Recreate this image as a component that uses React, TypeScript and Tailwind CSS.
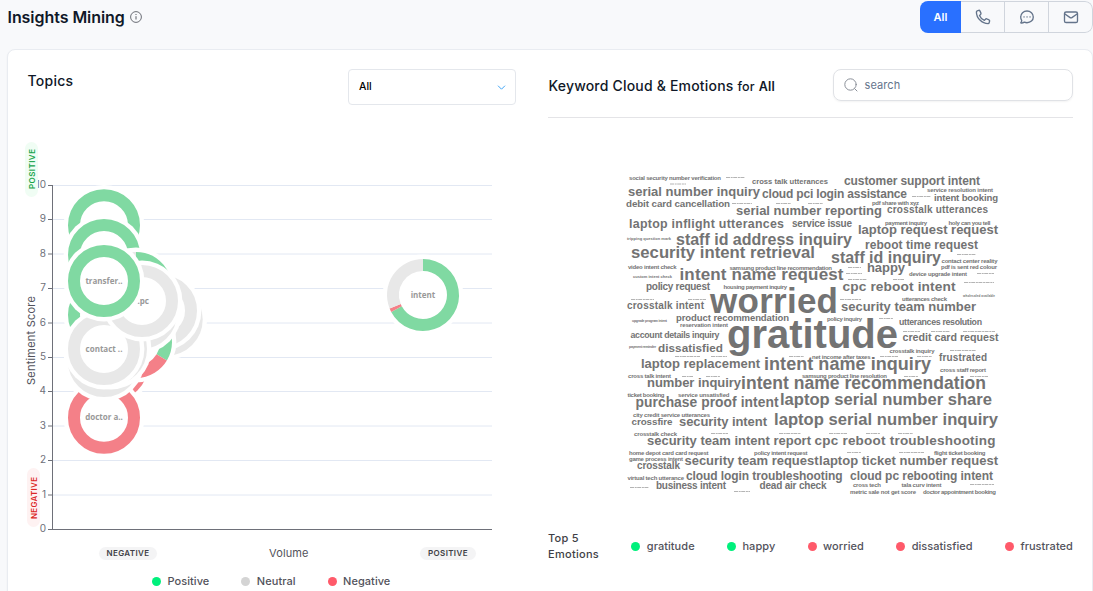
import React from "react";

type Word = [text: string, x: number, y: number, width: number, size: number];

const WORDS: Word[] = [
  ["social security number verification", 629, 180, 92, 6],
  ["cross talk utterances", 752, 184, 76, 7.6],
  ["customer support intent", 844, 185, 136, 12],
  ["serial number inquiry", 628, 196, 132, 13],
  ["cloud pci login assistance", 762, 198, 145, 12],
  ["service resolution intent", 927, 192, 66, 6],
  ["intent booking", 934, 201, 64, 9.6],
  ["debit card cancellation", 626, 207, 104, 9.8],
  ["pdf share with xyz", 872, 205, 47, 6],
  ["serial number reporting", 736, 215, 146, 13],
  ["crosstalk utterances", 887, 213, 101, 10],
  ["laptop inflight utterances", 629, 228, 155, 12.4],
  ["service issue", 792, 226.5, 60, 10],
  ["payment inquiry", 885, 224.5, 42, 6],
  ["holy can you tell", 948.5, 224.5, 42, 6],
  ["laptop request request", 858, 234, 140, 13],
  ["tripping question mark", 627, 239.5, 44, 4],
  ["staff id address inquiry", 676, 244.5, 176, 16],
  ["reboot time request", 865, 249, 113, 12],
  ["security intent retrieval", 631, 258, 184, 16.7],
  ["staff id inquiry", 831, 263, 110, 16],
  ["contact center reality", 941.5, 262.5, 56, 6],
  ["happy", 867, 272, 38, 13],
  ["video intent check", 628, 269, 48.5, 6],
  ["samsung product line recommendation", 729.5, 269.5, 102.5, 6],
  ["pdf is sent red colour", 941, 269, 56, 6],
  ["custom intent check", 633, 278, 39, 4],
  ["intent name request", 679.5, 280, 164, 17],
  ["device upgrade intent", 909, 275.5, 58, 6],
  ["policy request", 646, 290, 64, 10],
  ["housing payment inquiry", 723.5, 288.5, 63.5, 6],
  ["cpc reboot intent", 842.5, 291, 113, 13.7],
  ["wholesaled available", 963, 297, 32, 3],
  ["worried", 710, 313, 128, 35],
  ["utterances check", 902, 301, 45, 6],
  ["crosstalk intent", 627, 309, 77, 10],
  ["security team number", 841, 311, 135, 13],
  ["product recommendation", 676, 321, 113, 9.5],
  ["policy inquiry", 827, 320.5, 35, 6],
  ["utterances resolution", 899, 325, 83, 8.8],
  ["upgrade program intent", 632, 322, 35, 3.5],
  ["reservation intent", 680, 327, 48, 6],
  ["gratitude", 727, 347.5, 171, 40],
  ["account details inquiry", 630.5, 337.5, 89, 8.8],
  ["credit card request", 902.5, 341, 96, 10.7],
  ["payment reminder", 629, 348, 27, 3.5],
  ["dissatisfied", 658, 351.5, 65, 11.7],
  ["crosstalk inquiry", 889.5, 352.5, 45, 6],
  ["net income after taxes", 812, 358.5, 58.5, 6],
  ["frustrated", 939, 360.5, 48, 10],
  ["laptop replacement", 641, 368, 119, 13],
  ["intent name inquiry", 764, 370, 167, 18],
  ["cross staff report", 940, 371.5, 46, 6],
  ["cross talk intent", 628, 378, 43, 6],
  ["samsung product line resolution", 802, 378, 85, 6],
  ["number inquiry", 647, 387, 94, 13],
  ["intent name recommendation", 741, 389, 245, 17.5],
  ["ticket booking", 627.5, 397, 37, 6],
  ["service unsatisfied", 678, 397, 51.5, 6],
  ["purchase proof intent", 635.5, 407, 143, 13.8],
  ["laptop serial number share", 780, 405, 212, 16.6],
  ["city credit service utterances", 633, 416.5, 77, 6],
  ["crossfire", 631.5, 424.5, 41, 9.8],
  ["security intent", 679, 426, 88, 13],
  ["laptop serial number inquiry", 774, 424.5, 224, 16.6],
  ["crosstalk check", 634, 436, 43, 6],
  ["security team intent report", 647, 445, 164, 13],
  ["cpc reboot troubleshooting", 814.5, 445, 181, 13.5],
  ["home depot card card request", 629, 455, 79.5, 6],
  ["policy intent request", 754, 455, 53.5, 6],
  ["flight ticket booking", 934, 455, 51.5, 6],
  ["game process intent", 629, 461, 54, 6],
  ["security team request", 684.5, 464.5, 134, 13],
  ["laptop ticket number request", 819, 464.5, 179, 13],
  ["crosstalk", 637, 469, 43, 10],
  ["virtual tech utterance", 627.5, 480, 56.5, 6],
  ["cloud login troubleshooting", 686, 480, 156.5, 12],
  ["cloud pc rebooting intent", 850, 480, 143, 12],
  ["business intent", 656, 488.5, 70, 10],
  ["dead air check", 759.5, 488.5, 67, 10],
  ["cross tech", 853, 486.5, 28, 6],
  ["tala curv intent", 901.5, 486.5, 40, 6],
  ["metric sale not get score", 850, 493.5, 66, 6],
  ["doctor appointment booking", 923, 493.5, 73, 6],
];

// Keywords too small to read: start, end and height of each.
const SPECKS: [number, number, number][] = [
  [726, 745, 177.5], [670, 686, 184], [732, 752, 203.5], [776, 791, 203.5], [808, 823, 203.5],
  [912, 931, 196.5], [957, 976, 254.5], [846, 862, 273.5], [977, 994, 273.5], [848, 867, 279.5],
  [893, 904, 279.5], [848, 861, 267.5], [964, 994, 282.5], [631, 654, 299.5], [688, 706, 299.5],
  [840, 861, 299.5], [879, 893, 318.5], [903, 920, 331.5], [931, 950, 331.5], [963, 995, 331.5],
  [950, 976, 350.5], [675, 700, 356.5], [711, 727, 356.5], [789, 804, 356.5], [880, 898, 356.5],
  [917, 932, 356.5], [682, 693, 376.5], [706, 720, 376.5], [904, 918, 376.5], [970, 988, 376.5],
  [711, 728, 433.5], [779, 801, 433.5], [829, 847, 433.5], [866, 880, 433.5], [898, 913, 433.5],
  [847, 861, 452.5], [899, 924, 452.5], [630, 649, 487.5], [970, 994, 484.5], [734, 750, 491.5],
];

const GREEN = "#80d9a2";
const RED = "#f48088";
const GREY = "#e8e8e8";

type Slice = [color: string, from: number, to: number];
type Donut = { x: number; y: number; slices: Slice[]; label?: string };

const full = (c: string): Slice[] => [[c, 0, 360]];

const DONUTS: Donut[] = [
  { x: 104, y: 225.3, slices: full(GREEN) },
  { x: 104, y: 255, slices: full(GREEN) },
  { x: 104, y: 315, slices: full(GREEN) },
  { x: 112, y: 365, slices: full(RED) },
  { x: 104, y: 417.7, slices: full(RED), label: "doctor a.." },
  { x: 166.7, y: 319.5, slices: full(GREY) },
  { x: 161, y: 310.7, slices: full(GREY) },
  { x: 136, y: 342, slices: [[GREEN, 0, 121], [RED, 121, 360]] },
  { x: 136, y: 288, slices: [[GREEN, 0, 300], [GREY, 300, 360]] },
  { x: 141, y: 313, slices: full(GREY) },
  { x: 104, y: 361, slices: full(GREY) },
  { x: 111, y: 349, slices: full(GREY) },
  { x: 104, y: 349, slices: full(GREY), label: "contact .." },
  { x: 142, y: 301, slices: full(GREY), label: "..pc" },
  { x: 104, y: 281, slices: full(GREEN), label: "transfer.." },
  { x: 423, y: 295, slices: [[GREEN, 0, 242], [RED, 242, 248], [GREY, 248, 360]], label: "intent" },
];

function arc(cx: number, cy: number, r: number, from: number, to: number) {
  const p = (a: number) => {
    const t = ((a - 90) * Math.PI) / 180;
    return `${cx + r * Math.cos(t)} ${cy + r * Math.sin(t)}`;
  };
  return `M ${p(from)} A ${r} ${r} 0 ${to - from > 180 ? 1 : 0} 1 ${p(to)}`;
}

function DonutMark({ x, y, slices, label }: Donut) {
  return (
    <g>
      <circle cx={x} cy={y} r={40.4} fill="#fff" />
      {slices.map(([color, from, to]) =>
        to - from === 360 ? (
          <circle key={from} cx={x} cy={y} r={30} fill="none" stroke={color} strokeWidth={12} />
        ) : (
          <path key={from} d={arc(x, y, 30, from, to)} fill="none" stroke={color} strokeWidth={12} />
        ),
      )}
      {label && (
        <text x={x} y={y + 2.7} textAnchor="middle" className="fill-[#999] font-['Open_Sans',sans-serif] text-[8px] font-bold">
          {label}
        </text>
      )}
    </g>
  );
}

// Centre line of each grid line, from score 0 to score 10.
const TICK_Y = [529.5, 495, 460.5, 426, 391.5, 357.5, 323, 288.5, 254, 219.5, 185.5];

function TopicsChart() {
  return (
    <svg width={500} height={440} viewBox="8 130 500 440" className="block">
      {TICK_Y.slice(1).map((y) => (
        <line key={y} x1={53} x2={492} y1={y} y2={y} stroke="#e2e8f3" />
      ))}
      {TICK_Y.map((y, v) => (
        <g key={v}>
          <line x1={48} x2={53} y1={y} y2={y} stroke="#6e7079" />
          <text x={46} y={Math.floor(y) + 3} textAnchor="end" className="fill-[#6e7079] font-['Inter',sans-serif] text-[10px]">
            {v}
          </text>
        </g>
      ))}
      <path d="M52.5 185V529.5H492" fill="none" stroke="#6e7079" />
      {DONUTS.map((d, i) => (
        <DonutMark key={i} {...d} />
      ))}
      <rect x={25} y={142} width={13} height={55} rx={6.5} fill="#f0fdf4" />
      <text transform="translate(35 189) rotate(-90)" textLength={40} className="fill-[#16a34a] font-['Inter',sans-serif] text-[8px] font-semibold">
        POSITIVE
      </text>
      <rect x={27} y={468} width={13} height={59} rx={6.5} fill="#fef2f2" />
      <text transform="translate(37 519) rotate(-90)" textLength={42} className="fill-[#dc2626] font-['Inter',sans-serif] text-[8px] font-semibold">
        NEGATIVE
      </text>
      <text transform="translate(35 385) rotate(-90)" textLength={89} className="fill-[#52525b] font-['Inter',sans-serif] text-[11px]">
        Sentiment Score
      </text>
      <rect x={99} y={547} width={58} height={13} rx={6.5} fill="#f4f4f5" />
      <text x={106.5} y={556} textLength={42.5} className="fill-[#3f3f46] font-['Inter',sans-serif] text-[8px] font-semibold">
        NEGATIVE
      </text>
      <rect x={420} y={547} width={56} height={13} rx={6.5} fill="#f4f4f5" />
      <text x={428} y={556} textLength={39.5} className="fill-[#3f3f46] font-['Inter',sans-serif] text-[8px] font-semibold">
        POSITIVE
      </text>
      <text x={269} y={557} textLength={39.5} className="fill-[#52525b] font-['Inter',sans-serif] text-[11px]">
        Volume
      </text>
    </svg>
  );
}

function KeywordCloud() {
  return (
    <svg width={380} height={330} viewBox="623 170 380 330" className="block">
      {SPECKS.map(([a, b, y], i) => (
        <line key={i} x1={a} x2={b} y1={y} y2={y} stroke="#b4b4b4" strokeDasharray="4 0.7 2 0.5" />
      ))}
      {WORDS.map(([text, x, y, width, size]) => (
        <text
          key={text}
          x={x}
          y={y}
          textLength={width}
          fontSize={size}
          className="fill-[#737373] font-['Liberation_Sans',sans-serif] font-bold"
        >
          {text}
        </text>
      ))}
    </svg>
  );
}

function LegendDot({ color, label }: { color: string; label: string }) {
  return (
    <div className="flex items-center">
      <span className={`mr-[6.5px] size-[9px] rounded-full ${color}`} />
      <span className="text-[11px] leading-4 font-medium tracking-[0.05px] text-[#52525b]">{label}</span>
    </div>
  );
}

const ICON = "size-4";

function ChannelTabs() {
  const tab = "flex h-full items-center justify-center border-l border-[#d0d5dd] w-11";
  const svg = { viewBox: "0 0 16 16", fill: "none", stroke: "#64748b", strokeWidth: 1.35, strokeLinecap: "round", strokeLinejoin: "round" } as const;
  return (
    <div className="flex h-8 w-[173px] overflow-hidden rounded-lg">
      <div className="flex h-full w-[41px] items-center justify-center bg-[#2970ff] text-[11px] font-semibold text-white">All</div>
      <div className="flex flex-1 rounded-r-lg border border-l-0 border-[#d0d5dd]">
        <div className="flex h-full w-[43px] items-center justify-center">
          <svg {...svg} className={ICON}>
            <path d="M2.2 1.8 3.7 1.3c.5-.1 1 .1 1.2.6l1 2.2c.2.5.1 1-.3 1.3L4.5 6.4c.9 2.2 2.6 4 4.9 5l1.1-1.2c.3-.4.9-.5 1.3-.3l2.2 1c.5.2.7.7.6 1.2l-.5 1.7c-.1.5-.6.8-1 .8C7 14.600 1.400 9 1.400 2.900c0-.5.3-.9.8-1.100Z" />
          </svg>
        </div>
        <div className={tab}>
          <svg {...svg} className={ICON}>
            <path d="M8 2c3.500 0 6.300 2.500 6.300 5.900S11.500 13.700 8 13.700c-.9 0-1.800-.2-2.600-.5-1 .6-2 1-3.200.9-.5 0-.5-.3-.2-.7.6-.7.8-1.300.7-2A5.700 5.700 0 0 1 1.700 7.900C1.700 4.500 4.500 2 8 2Z" />
            <path d="M5 7.900h.1M8 7.900h.1M11 7.900h.1" strokeWidth={1.4} />
          </svg>
        </div>
        <div className={tab}>
          <svg {...svg} className={ICON}>
            <rect x="1.500" y="3" width="13" height="10.500" rx="1.600" />
            <path d="M1.600 4.800 7.100 8.600c.5.4 1.200.4 1.800 0l5.500-3.800" />
          </svg>
        </div>
      </div>
    </div>
  );
}

export default function App() {
  return (
    <div className="flex h-[591px] w-full flex-col overflow-hidden bg-[#f8f9fb] font-['Inter',sans-serif] text-[#101828]">
      <header className="flex h-[49px] shrink-0 items-start justify-between pt-px pl-[7.500px]">
        <div className="flex h-8 items-center gap-[5px]">
          <h1 className="text-[16px] font-semibold tracking-[-0.050px]">Insights Mining</h1>
          <svg className="size-3" viewBox="0 0 12 12" fill="none" stroke="#5b5f66">
            <circle cx="6" cy="6" r="5.400" strokeWidth="0.900" />
            <path d="M6 5.200v3.300M6 3v1" strokeWidth="1" />
          </svg>
        </div>
        <ChannelTabs />
      </header>

      <main className="ml-[7px] flex h-[600px] shrink-0 rounded-lg border border-[#e9ecf1] bg-white shadow-xs">
        <section className="flex w-[520px] shrink-0 flex-col">
          <div className="flex h-[80px] shrink-0 items-start justify-between pt-[19px] pr-[12px] pl-[19.500px]">
            <h2 className="text-[14px] leading-6 font-medium tracking-[0.25px]">Topics</h2>
            <div className="flex h-9 w-[168px] items-center justify-between rounded border border-[#e4e7ec] pr-[9px] pl-[10px]">
              <span className="text-[10.500px] font-medium text-black">All</span>
              <svg className="h-[5px] w-[9px]" viewBox="0 0 9 5" fill="none" stroke="#42a5f5">
                <path d="m1 .7 3.500 3.500L8 .7" />
              </svg>
            </div>
          </div>
          <div className="h-[440px] shrink-0">
            <TopicsChart />
          </div>
          <div className="flex h-[22px] items-center gap-[32px] pl-[144px]">
            <LegendDot color="bg-[#00f07c]" label="Positive" />
            <LegendDot color="bg-[#d4d4d4]" label="Neutral" />
            <LegendDot color="bg-[#ff5a6a]" label="Negative" />
          </div>
        </section>

        <section className="ml-[20px] flex w-[525px] shrink-0 flex-col">
          <div className="flex h-[68px] shrink-0 items-start justify-between border-b border-[#e4e4e7] pt-[19px]">
            <h2 className="pl-[0.500px] text-[14px] leading-[34px] font-medium tracking-[0.190px]">
              Keyword Cloud &amp; Emotions <span className="text-[12.500px]">for</span>{" "}
              <span className="text-[12.500px] font-semibold">All</span>
            </h2>
            <div className="flex h-8 w-[240px] items-center gap-[6.500px] rounded-lg border border-[#e0e2e6] pl-[10px] shadow-xs">
              <svg className="size-[14px]" viewBox="0 0 14 14" fill="none" stroke="#8a8f98" strokeWidth="1" strokeLinecap="round">
                <circle cx="6.500" cy="6.500" r="5.700" />
                <path d="m10.700 10.700 2.300 2.300" />
              </svg>
              <span className="text-[11px] tracking-[0.080px] text-[#64748b]">search</span>
            </div>
          </div>
          <div className="mt-[52px] ml-[75px] h-[330px] shrink-0">
            <KeywordCloud />
          </div>
          <div className="mt-[30px] flex h-8 items-center justify-between">
            <div className="w-[51px] text-[11px] leading-4 font-medium tracking-[0.280px] text-[#3f3f46]">
              Top 5
              <br />
              Emotions
            </div>
            <LegendDot color="bg-[#00f07c]" label="gratitude" />
            <LegendDot color="bg-[#00f07c]" label="happy" />
            <LegendDot color="bg-[#ff5a6a]" label="worried" />
            <LegendDot color="bg-[#ff5a6a]" label="dissatisfied" />
            <LegendDot color="bg-[#ff5a6a]" label="frustrated" />
          </div>
        </section>
      </main>
    </div>
  );
}
